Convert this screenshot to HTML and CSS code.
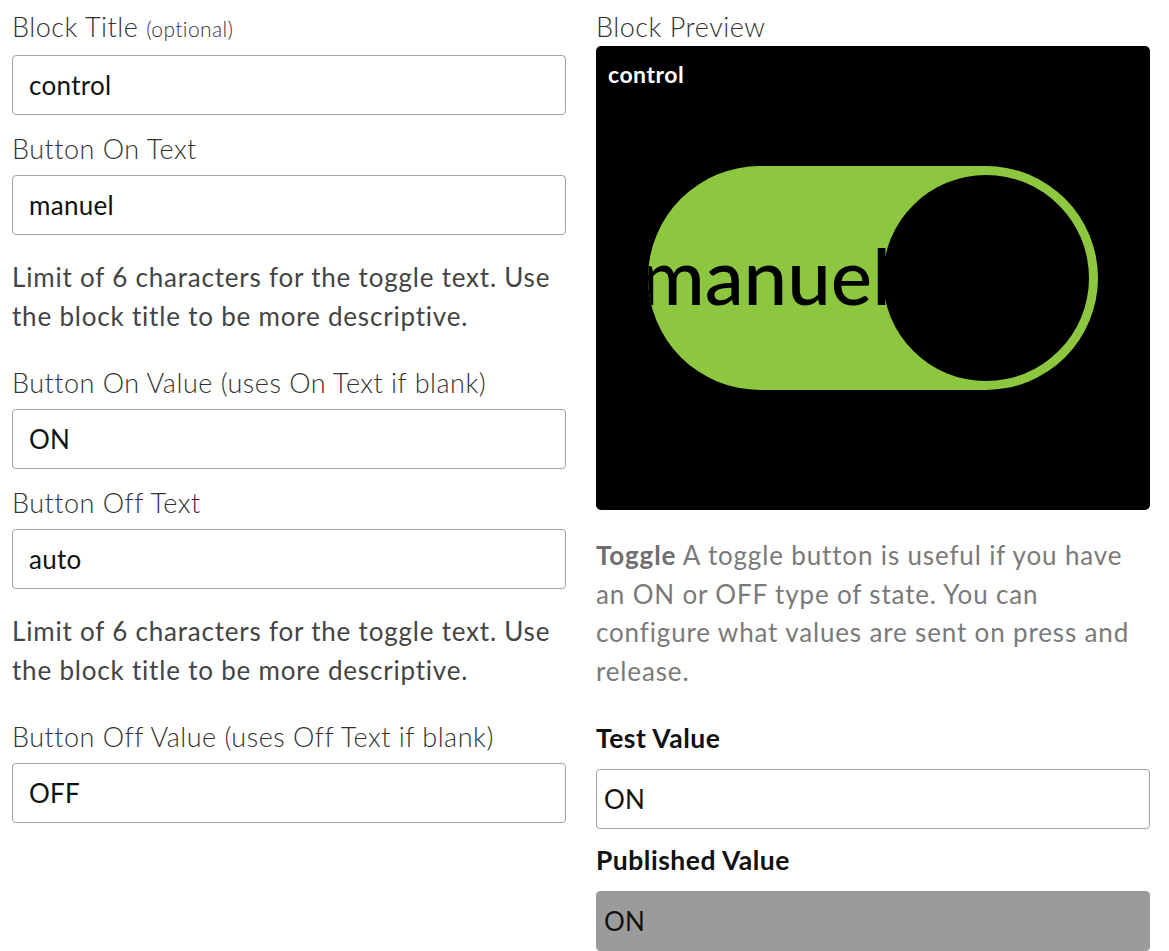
FILE: index.html
```html
<!DOCTYPE html>
<html>
<head>
<meta charset="utf-8">
<link rel="stylesheet" href="styles.css">
</head>
<body>
<div class="page">
  <div class="col">
    <label class="lbl">Block Title <small>(optional)</small></label>
    <input class="inp" type="text" value="control">
    <label class="lbl">Button On Text</label>
    <input class="inp" type="text" value="manuel">
    <p class="help">Limit of 6 characters for the toggle text. Use the block title to be more descriptive.</p>
    <label class="lbl">Button On Value (uses On Text if blank)</label>
    <input class="inp" type="text" value="ON">
    <label class="lbl">Button Off Text</label>
    <input class="inp" type="text" value="auto">
    <p class="help">Limit of 6 characters for the toggle text. Use the block title to be more descriptive.</p>
    <label class="lbl">Button Off Value (uses Off Text if blank)</label>
    <input class="inp" type="text" value="OFF">
  </div>
  <div class="col">
    <label class="lbl plbl">Block Preview</label>
    <div class="preview">
      <div class="ptitle">control</div>
      <div class="pill">
        <span class="ptext">manuel</span>
        <span class="knob"></span>
      </div>
    </div>
    <p class="desc"><b>Toggle</b> A toggle button is useful if you have an ON or OFF type of state. You can configure what values are sent on press and release.</p>
    <label class="lbl strong">Test Value</label>
    <input class="inp tight" type="text" value="ON">
    <label class="lbl strong">Published Value</label>
    <input class="inp tight pub" type="text" value="ON" readonly>
  </div>
</div>
</body>
</html>
```

FILE: styles.css
```css
html, body {
  margin: 0;
  padding: 0;
  background: #fff;
}
body {
  font-family: "Lato", "Open Sans", sans-serif;
  color: #333;
  overflow: hidden;
}
.page {
  display: flex;
  gap: 30px;
  padding: 9px 0 0 12px;
}
.col {
  width: 554px;
  display: flex;
  flex-direction: column;
}
.lbl {
  display: block;
  font-size: 27px;
  line-height: 36px;
  font-weight: 300;
  letter-spacing: 0.5px;
  color: #333;
  margin-bottom: 8px;
}
.lbl small {
  font-size: 21px;
  letter-spacing: 0.4px;
}
.lbl.plbl {
  margin-bottom: 1px;
}
.lbl.strong {
  font-weight: 700;
  color: #111;
  font-size: 26.5px;
  margin-bottom: 13px;
}
.inp {
  box-sizing: border-box;
  width: 554px;
  height: 60px;
  border: 1px solid #a3a3a3;
  border-radius: 4px;
  padding: 0 16px;
  font-family: inherit;
  font-size: 26px;
  letter-spacing: 0.3px;
  color: #111;
  background: #fff;
  margin: 0 0 16px 0;
  outline: none;
}
.inp.tight {
  padding: 0 7px;
  margin-bottom: 13px;
}
.inp.pub {
  background: #9b9b9b;
  border-color: #9b9b9b;
}
.help {
  font-size: 26px;
  letter-spacing: 0.8px;
  line-height: 38.5px;
  color: #444;
  margin: 7px 0 30px 0;
}
.preview {
  position: relative;
  height: 464px;
  background: #000;
  border-radius: 5px;
  display: flex;
  align-items: center;
  justify-content: center;
}
.ptitle {
  position: absolute;
  left: 12px;
  top: 14px;
  color: #fff;
  font-weight: 700;
  font-size: 23px;
  letter-spacing: 0.5px;
}
.pill {
  width: 450px;
  height: 224px;
  border-radius: 112px;
  background: #8dc63f;
  display: flex;
  align-items: center;
  overflow: hidden;
}
.ptext {
  flex: 1;
  font-size: 78px;
  font-weight: 500;
  color: #000;
  white-space: nowrap;
  width: 0;
  display: flex;
  justify-content: center;
  margin-top: -6px;
}
.knob {
  width: 206px;
  height: 206px;
  border-radius: 50%;
  background: #000;
  margin-right: 9px;
  flex: none;
}
.desc {
  font-size: 26px;
  letter-spacing: 0.85px;
  line-height: 38.6px;
  color: #7a7a7a;
  margin: 26px 0 30px 0;
}
.desc b {
  color: #6f6f6f;
}
```
